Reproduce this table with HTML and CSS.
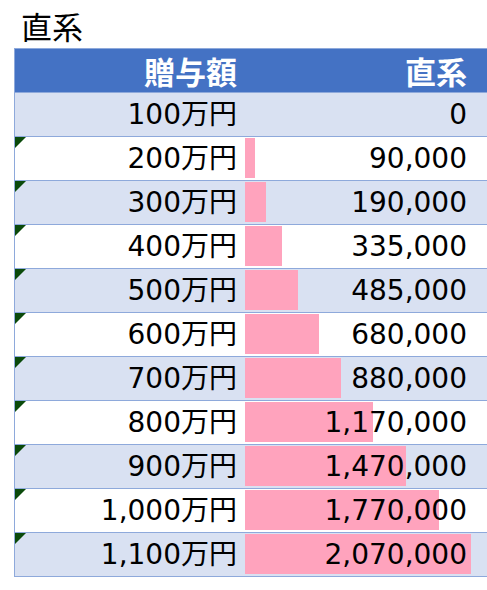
FILE: index.html
```html
<!DOCTYPE html>
<html lang="ja">
<head>
<meta charset="utf-8">
<link rel="stylesheet" href="styles.css">
</head>
<body>
<div class="title">直系</div>
<div class="table">
  <div class="row head">
    <div class="cell c1">贈与額</div>
    <div class="cell c2">直系</div>
  </div>
  <div class="row band">
    <div class="cell c1">100万円</div>
    <div class="cell c2"><span class="val">0</span></div>
  </div>
  <div class="row">
    <div class="cell c1 flag">200万円</div>
    <div class="cell c2"><span class="bar" style="width:9.8px"></span><span class="val">90,000</span></div>
  </div>
  <div class="row band">
    <div class="cell c1 flag">300万円</div>
    <div class="cell c2"><span class="bar" style="width:20.7px"></span><span class="val">190,000</span></div>
  </div>
  <div class="row">
    <div class="cell c1 flag">400万円</div>
    <div class="cell c2"><span class="bar" style="width:36.6px"></span><span class="val">335,000</span></div>
  </div>
  <div class="row band">
    <div class="cell c1 flag">500万円</div>
    <div class="cell c2"><span class="bar" style="width:53px"></span><span class="val">485,000</span></div>
  </div>
  <div class="row">
    <div class="cell c1 flag">600万円</div>
    <div class="cell c2"><span class="bar" style="width:74.2px"></span><span class="val">680,000</span></div>
  </div>
  <div class="row band">
    <div class="cell c1 flag">700万円</div>
    <div class="cell c2"><span class="bar" style="width:96.4px"></span><span class="val">880,000</span></div>
  </div>
  <div class="row">
    <div class="cell c1 flag">800万円</div>
    <div class="cell c2"><span class="bar" style="width:127.9px"></span><span class="val">1,170,000</span></div>
  </div>
  <div class="row band">
    <div class="cell c1 flag">900万円</div>
    <div class="cell c2"><span class="bar" style="width:160.6px"></span><span class="val">1,470,000</span></div>
  </div>
  <div class="row">
    <div class="cell c1 flag">1,000万円</div>
    <div class="cell c2"><span class="bar" style="width:193.5px"></span><span class="val">1,770,000</span></div>
  </div>
  <div class="row band">
    <div class="cell c1 flag">1,100万円</div>
    <div class="cell c2"><span class="bar" style="width:226px"></span><span class="val">2,070,000</span></div>
  </div>
</div>
</body>
</html>
```
FILE: styles.css
```css
html, body {
  margin: 0;
  padding: 0;
  background: #ffffff;
  overflow: hidden;
}
body {
  font-family: "DejaVu Sans", "Noto Sans CJK JP", sans-serif;
  color: #000000;
}
.title {
  height: 48px;
  padding-left: 21px;
  font-family: "Noto Sans CJK JP", sans-serif;
  font-size: 31px;
  line-height: 52px;
  box-sizing: border-box;
}
.table {
  margin-left: 14px;
  border-left: 1px solid #8ea9db;
  border-top: 1px solid #8ea9db;
}
.row {
  display: grid;
  grid-template-columns: 230px 1fr;
  height: 43px;
  border-bottom: 1px solid #8ea9db;
  background: #ffffff;
}
.row.band {
  background: #d9e1f2;
}
.row.head {
  background: #4472c4;
  color: #ffffff;
  font-weight: bold;
  font-family: "Noto Sans CJK JP", sans-serif;
}
.cell {
  position: relative;
  display: flex;
  align-items: center;
  justify-content: flex-end;
  font-size: 28px;
  line-height: 43px;
  white-space: nowrap;
}
.c1 {
  padding-right: 8px;
}
.c2 {
  padding-right: 20px;
}
.head .cell {
  font-size: 31px;
  line-height: 43px;
}
.flag::before {
  content: "";
  position: absolute;
  left: 0;
  top: 0;
  width: 0;
  height: 0;
  border-top: 11px solid #0b4a0b;
  border-right: 11px solid transparent;
}
.bar {
  position: absolute;
  left: 0;
  top: 1px;
  height: 40px;
  background: #ffa3bd;
}
.val {
  position: relative;
}
```
